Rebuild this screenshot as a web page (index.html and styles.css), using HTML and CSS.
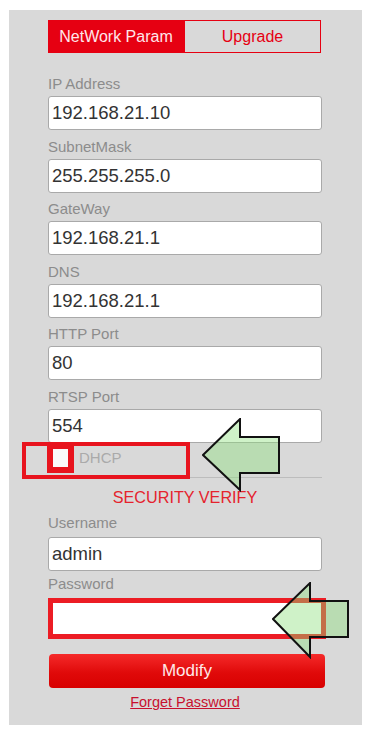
FILE: index.html
```html
<!DOCTYPE html>
<html lang="en">
<head>
  <meta charset="UTF-8" />
  <title>Network Param</title>
  <link rel="stylesheet" href="styles.css">
</head>
<body>

  <div class="panel">

    <div class="tabs">
      <div class="tab active">NetWork Param</div>
      <div class="tab">Upgrade</div>
    </div>

    <div class="fields">
      <div class="field">
        <label>IP Address</label>
        <div class="input">192.168.21.10</div>
      </div>
      <div class="field">
        <label>SubnetMask</label>
        <div class="input">255.255.255.0</div>
      </div>
      <div class="field">
        <label>GateWay</label>
        <div class="input">192.168.21.1</div>
      </div>
      <div class="field">
        <label>DNS</label>
        <div class="input">192.168.21.1</div>
      </div>
      <div class="field">
        <label>HTTP Port</label>
        <div class="input">80</div>
      </div>
      <div class="field">
        <label>RTSP Port</label>
        <div class="input">554</div>
      </div>
    </div>

    <div class="dhcp-row">
      <span class="checkbox"></span>
      <span class="dhcp-text">DHCP</span>
    </div>

    <div class="security">SECURITY VERIFY</div>

    <label class="user-label">Username</label>
    <div class="input">admin</div>

    <label class="pass-label">Password</label>
    <div class="pass-box"></div>

    <button class="modify">Modify</button>

    <a href="#" class="forget">Forget Password</a>

    <!-- annotations drawn over the screenshot -->
    <div class="mark-dhcp"></div>

    <svg class="arrow arrow-dhcp" width="79" height="74" viewBox="0 0 79 74">
      <polygon points="1,37 38,1 38,19 77,19 77,55 38,55 38,72" />
    </svg>

    <svg class="arrow arrow-pass" width="78" height="77" viewBox="0 0 78 77">
      <polygon points="1,37 38,1 38,19 76,19 76,55 38,55 38,75" />
    </svg>

  </div>

</body>
</html>
```

FILE: styles.css
```css
* {
  box-sizing: border-box;
  margin: 0;
  padding: 0;
  font-family: 'Liberation Sans', Arial, sans-serif;
}

body {
  background-color: #ffffff;
}

.panel {
  position: relative;
  width: 353px;
  height: 715px;
  margin: 10px 0 0 9px;
  padding: 10px 40px 0 39px;
  background-color: #d9d9d9;
}

.tabs {
  display: flex;
  height: 33px;
}

.tab {
  width: 136px;
  line-height: 31px;
  text-align: center;
  font-size: 16px;
  color: #e60012;
  border: 1px solid #e60012;
}

.tab + .tab {
  width: 137px;
}

.tab.active {
  background-color: #e60012;
  color: #ffe6ea;
}

.fields {
  display: flex;
  flex-direction: column;
  gap: 6.5px;
  margin-top: 21px;
}

label {
  display: block;
  font-size: 15px;
  line-height: 20px;
  color: #8c8c8c;
}

.field label {
  margin-bottom: 2px;
}

.input {
  height: 34px;
  padding-left: 3px;
  background-color: #fff;
  border: 1px solid #a9a9a9;
  border-radius: 3px;
  font-size: 18.5px;
  line-height: 32px;
  color: #333;
}

.dhcp-row {
  display: flex;
  align-items: flex-start;
  height: 35px;
  margin-top: 0.5px;
  border-bottom: 1px solid #bdbdbd;
}

.checkbox {
  width: 27px;
  height: 30px;
  margin-left: -1px;
  background-color: #fafafa;
  border: 6px solid #e8141e;
}

.dhcp-text {
  margin-left: 5px;
  font-size: 15px;
  line-height: 30px;
  color: #aaa;
}

.security {
  margin-top: 9px;
  text-align: center;
  font-size: 16.2px;
  line-height: 20px;
  color: #e5232d;
}

.user-label {
  margin: 6px 0 4px;
}

.pass-label {
  margin: 3px 0 4px;
}

.pass-box {
  width: 278px;
  height: 41px;
  background-color: #fff;
  border: 5px solid #ec1c24;
}

.modify {
  display: block;
  width: 276px;
  height: 34px;
  margin: 15px 0 0 1px;
  border: none;
  border-radius: 4px;
  background: linear-gradient(#f52a2a, #e00a0a 55%, #d80000);
  color: #ffe8e8;
  font-size: 17px;
  cursor: pointer;
}

.forget {
  display: block;
  width: max-content;
  margin: 4px auto 0;
  font-size: 14.5px;
  line-height: 20px;
  color: #c8102e;
}

.mark-dhcp {
  position: absolute;
  left: 13px;
  top: 432px;
  width: 168px;
  height: 37px;
  border: 4px solid #e8141e;
}

.arrow {
  position: absolute;
}

.arrow polygon {
  fill: rgba(140, 225, 125, 0.42);
  stroke: #111;
  stroke-width: 2;
}

.arrow-dhcp {
  left: 193px;
  top: 408px;
}

.arrow-pass {
  left: 263px;
  top: 572px;
}
```
